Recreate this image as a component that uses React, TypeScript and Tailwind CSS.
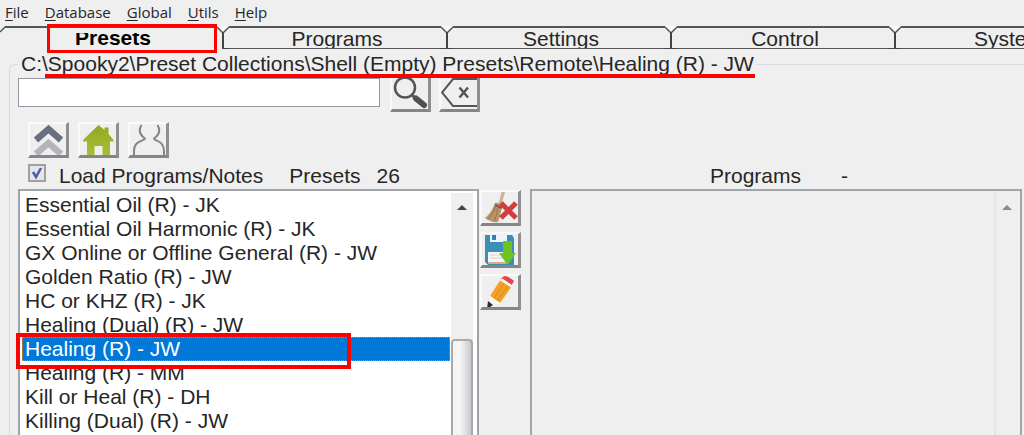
import { useState } from "react";
import type { ReactNode } from "react";

const menus = ["File", "Database", "Global", "Utils", "Help"];
const tabs = ["Presets", "Programs", "Settings", "Control", "System"];

const presets = [
  "Essential Oil (R) - JK",
  "Essential Oil Harmonic (R) - JK",
  "GX Online or Offline General (R) - JW",
  "Golden Ratio (R) - JW",
  "HC or KHZ (R) - JK",
  "Healing (Dual) (R) - JW",
  "Healing (R) - JW",
  "Healing (R) - MM",
  "Kill or Heal (R) - DH",
  "Killing (Dual) (R) - JW",
];

function IconButton({
  label,
  children,
}: {
  label: string;
  children: ReactNode;
}) {
  return (
    <button
      type="button"
      aria-label={label}
      className="flex h-9 w-[41px] shrink-0 items-center justify-center overflow-hidden border-t-2 border-r-[3px] border-b-[3px] border-l-2 border-t-[#f9f9f9] border-r-[#8f8f8f] border-b-[#858585] border-l-[#f9f9f9] bg-[#efefef]"
    >
      {children}
    </button>
  );
}

function SearchIcon() {
  return (
    <svg width="36" height="31" viewBox="0 0 36 31" fill="none" aria-hidden="true">
      <circle cx="13" cy="9.500" r="10" stroke="#555" strokeWidth="2.500" />
      <path d="M20 17l5 5" stroke="#555" strokeWidth="3" />
      <path d="M24 20.500l8 6.500" stroke="#505050" strokeWidth="6" strokeLinecap="round" />
    </svg>
  );
}

function ClearIcon() {
  return (
    <svg width="36" height="31" viewBox="0 0 36 31" fill="none" aria-hidden="true">
      <path d="M36 1H12L1 14.500l11 13.500h24" stroke="#555" strokeWidth="2" />
      <path d="M18.500 9.500l8.500 10M27 9.500l-8.500 10" stroke="#555" strokeWidth="2.500" />
    </svg>
  );
}

function UpIcon() {
  return (
    <svg width="36" height="32" viewBox="0 0 36 32" fill="none" aria-hidden="true">
      <path d="M6 30l12.500-11L31 30" stroke="#b3b4bc" strokeWidth="6.500" />
      <path d="M6 16L18.500 5 31 16" stroke="#686f80" strokeWidth="6.500" />
    </svg>
  );
}

function HomeIcon() {
  return (
    <svg width="36" height="32" viewBox="0 0 36 32" aria-hidden="true">
      <defs>
        <linearGradient id="home" x1="0" y1="0" x2="0" y2="1">
          <stop offset="0" stopColor="#91a91d" />
          <stop offset="1" stopColor="#a8bf38" />
        </linearGradient>
      </defs>
      <path
        d="M18.500 1l6 5V3.500h4V10l5 6v1.500H30V32h-7.500V22h-8v10H7V17.500H3V16z"
        fill="url(#home)"
      />
    </svg>
  );
}

function PersonIcon() {
  return (
    <svg width="36" height="32" viewBox="0 0 36 32" fill="none" aria-hidden="true">
      <path
        d="M11.500 1C8.500 6 10 11 15 14.500C15 17 4 16 4 27V32M27.500 1C30.500 6 29 11 24 14.500C24 17 34 16 34 27V32"
        stroke="#858585"
        strokeWidth="2"
      />
    </svg>
  );
}

function BroomIcon() {
  return (
    <svg width="36" height="31" viewBox="0 0 36 31" aria-hidden="true">
      <path d="M19.500 0H23l-3.500 13-3-1z" fill="#c9b698" />
      <path d="M13 11c3-1 6 1 7 4-1 5-2 10-4 15-4 1-9-1-13-4 5-4 8-9 10-15z" fill="#b79568" />
      <path d="M13 15c-1 5-4 9-7 12M16 16c-1 5-2 9-4 13" stroke="#94744b" fill="none" />
      <path d="M13 13l7 3" stroke="#9d4f45" strokeWidth="2" />
      <path d="M19 11l15 15M34 11L19 26" stroke="#d83b3d" strokeWidth="5" />
    </svg>
  );
}

function SaveIcon() {
  return (
    <svg width="36" height="32" viewBox="0 0 36 32" aria-hidden="true">
      <path d="M3 1h27l2 3v27H6l-3-3z" fill="#3a8fb7" />
      <path d="M8 1h17v7H8z" fill="#eef5fa" />
      <path d="M10 1h4v5h-4z" fill="#2f83ad" />
      <path d="M6 18h20v11H6z" fill="#f5f5f5" />
      <path d="M8 21h13M8 24h13" stroke="#cfd3d6" />
      <path d="M6 29h20" stroke="#d9a982" strokeWidth="2" />
      <path d="M21 7h9v12h4l-8.500 12L17 19h4z" fill="#6cc424" />
    </svg>
  );
}

function PencilIcon() {
  return (
    <svg width="36" height="32" viewBox="0 0 36 32" aria-hidden="true">
      <path d="M19 3l3-3c4 0 8 3 10 5l-3 5z" fill="#e2434c" />
      <path d="M18.500 5l2-2.500L30 9l-2 3z" fill="#f7f3f2" />
      <path d="M18 4.500L29 11.500 18 27 8 20z" fill="#f2a126" />
      <path d="M22 7L12 22M26 10L15 25" stroke="#d98a18" fill="none" />
      <path d="M8 20l10 7-11 5z" fill="#faf6f0" />
      <path d="M6 25l5 4-6 4z" fill="#2b2b2b" />
    </svg>
  );
}

function TabStrip({
  active,
  onChange,
}: {
  active: string;
  onChange: (tab: string) => void;
}) {
  return (
    <nav className="flex h-[25px] overflow-x-clip">
      <svg className="shrink-0" width="5" height="23" fill="none" aria-hidden="true">
        <path d="M0 6l5-5" stroke="#555" strokeWidth="1.500" />
      </svg>
      {tabs.map((tab) => (
        <div key={tab} className="flex shrink-0">
          <button
            type="button"
            onClick={() => onChange(tab)}
            className={
              tab === active
                ? "relative h-[23px] w-[212px] border-t-2 border-[#555] font-bold text-black"
                : "h-[23px] w-[212px] overflow-hidden border-t-2 border-b border-[#555] pl-1"
            }
          >
            {tab === active ? (
              <>
                <span className="mt-1 block h-4 overflow-hidden pl-1 leading-[10px]">{tab}</span>
                <span className="absolute -top-[4px] left-[42px] h-[29px] w-[170px] border-[3px] border-[#fd0000]" />
              </>
            ) : (
              <span className="-mt-px block leading-6">{tab}</span>
            )}
          </button>
          <svg className="shrink-0" width="12" height="23" fill="none" aria-hidden="true">
            <path d="M0 0h12L6 6z" fill="#f8f8f8" />
            <path d="M0 1l6 6 6-6" stroke="#555" strokeWidth="1.500" />
            <path d="M6 6v17" stroke="#444" strokeWidth="2" />
            <path d={tab === active ? "M6 22.500h6" : "M0 22.500h12"} stroke="#444" />
          </svg>
        </div>
      ))}
    </nav>
  );
}

function ScrollUp({ color }: { color: string }) {
  return (
    <svg className="mx-auto mt-[11px]" width="12" height="6" aria-hidden="true">
      <path d="M1 6l5-5 5 5z" fill={color} />
    </svg>
  );
}

export default function App() {
  const [activeTab, setActiveTab] = useState("Presets");
  const [selected, setSelected] = useState("Healing (R) - JW");
  const [query, setQuery] = useState("");

  return (
    <div className="flex min-h-screen flex-col overflow-x-clip bg-[#efefef] font-['Liberation_Sans',Arial,sans-serif] text-[21px] leading-6 text-[#262626]">
      <header className="flex h-[26px] items-center gap-4 px-[5px] pb-[2px] font-['Open_Sans',sans-serif] text-[15px]">
        {menus.map((menu) => (
          <button key={menu} type="button" className="leading-6">
            <span className="underline underline-offset-2">{menu[0]}</span>
            {menu.slice(1)}
          </button>
        ))}
      </header>

      <TabStrip active={activeTab} onChange={setActiveTab} />

      <fieldset className="mt-px ml-[9px] flex min-w-0 flex-1 flex-col rounded-tl-md border-t border-l border-[#d3dde3] pl-2">
        <legend className="relative px-[3px] whitespace-nowrap">
          C:\Spooky2\Preset Collections\Shell (Empty) Presets\Remote\Healing (R) - JW
          <span className="absolute top-[22px] right-[2px] left-[27px] h-1 bg-[#fd0000]" />
        </legend>

        <div className="flex items-start">
          <input
            type="text"
            aria-label="Search presets"
            value={query}
            onChange={(e) => setQuery(e.target.value)}
            className="mt-[2px] mr-[10px] h-[29px] w-[362px] border border-[#9297a1] bg-white px-1 outline-none"
          />
          <div className="flex gap-2">
            <IconButton label="Search">
              <SearchIcon />
            </IconButton>
            <IconButton label="Clear search">
              <ClearIcon />
            </IconButton>
          </div>
        </div>

        <div className="mt-[10px] ml-[10px] flex gap-[9px]">
          <IconButton label="Up">
            <UpIcon />
          </IconButton>
          <IconButton label="Home">
            <HomeIcon />
          </IconButton>
          <IconButton label="User presets">
            <PersonIcon />
          </IconButton>
        </div>

        <div className="mt-[6px] flex h-6">
          <div className="flex w-[512px] shrink-0">
            <label className="ml-[10px] flex">
              <span className="relative mr-[13px] size-[18px]">
                <input
                  type="checkbox"
                  defaultChecked
                  className="peer block size-[18px] appearance-none border-2 border-[#a0a0a0] bg-[#e3e6ea]"
                />
                <svg
                  className="pointer-events-none absolute inset-0 hidden peer-checked:block"
                  width="18"
                  height="18"
                  fill="none"
                  aria-hidden="true"
                >
                  <path d="M5 8l3 5 5-9" stroke="#4a5fa5" strokeWidth="2.500" />
                </svg>
              </span>
              Load Programs/Notes
            </label>
            <span className="ml-[26px]">Presets</span>
            <span className="ml-4">26</span>
          </div>
          <div className="flex flex-1 pl-[180px]">
            <span>Programs</span>
            <span className="ml-10">-</span>
          </div>
        </div>

        <div className="mt-px flex flex-1 pr-[2px]">
          <div className="flex w-[461px] shrink-0 border-2 border-b-0 border-[#a0a4ac] bg-white">
            <ul className="flex-1 pt-[2px] pb-[2px] pl-[2px]">
              {presets.map((preset) => (
                <li key={preset} className="relative h-6">
                  <button
                    type="button"
                    onClick={() => setSelected(preset)}
                    className={
                      preset === selected
                        ? "block h-6 w-full border border-dotted border-[#c58a50] bg-[#0078d7] pl-[2px] text-left leading-[22px] text-white"
                        : "block h-6 w-full pl-[3px] text-left"
                    }
                  >
                    {preset}
                  </button>
                  {preset === selected && (
                    <span className="pointer-events-none absolute -top-1 -left-[6px] z-10 h-9 w-[335px] border-4 border-[#fd0000]" />
                  )}
                </li>
              ))}
            </ul>
            <div className="mt-[2px] mr-1 ml-px flex w-[22px] flex-col bg-[#efefef]">
              <ScrollUp color="#444" />
              <div className="mt-[129px] flex-1 rounded-t-sm border-2 border-b-0 border-[#a9a9a9] bg-linear-to-r from-[#f5f5f5] from-40% to-[#c9c9cd]" />
            </div>
          </div>

          <div className="ml-px flex w-[42px] shrink-0 flex-col gap-[6px] pt-px">
            <IconButton label="Delete preset">
              <BroomIcon />
            </IconButton>
            <IconButton label="Save preset">
              <SaveIcon />
            </IconButton>
            <IconButton label="Edit preset">
              <PencilIcon />
            </IconButton>
          </div>

          <div className="ml-2 flex flex-1 justify-end border-2 border-b-0 border-[#a0a4ac]">
            <div className="mt-[2px] mr-[2px] w-6 border-l-2 border-[#e6e6e6]">
              <ScrollUp color="#8a8a8a" />
            </div>
          </div>
        </div>
      </fieldset>
    </div>
  );
}
